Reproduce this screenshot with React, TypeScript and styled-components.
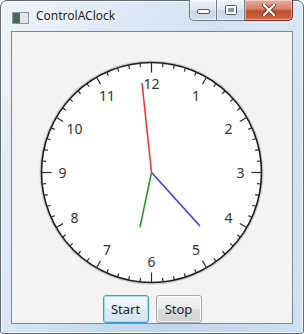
import React from "react";
import styled, { createGlobalStyle } from "styled-components";

const GlobalStyle = createGlobalStyle`
  html, body { margin: 0; padding: 0; background: #ffffff; }
  * { box-sizing: border-box; }
`;

const Window = styled.div`
  width: 304px;
  height: 334px;
  border: 1px solid #5f6b78;
  border-radius: 7px 7px 3px 3px;
  background:
    linear-gradient(100deg, rgba(255,255,255,0.6) 0%, rgba(255,255,255,0.2) 35%, rgba(255,255,255,0) 60%, rgba(255,255,255,0.25) 100%),
    linear-gradient(180deg, #d6e5f4 0%, #c8dcf0 40%, #bfd6ed 100%);
  box-shadow: inset 0 0 0 1px rgba(255,255,255,0.7);
  display: flex;
  flex-direction: column;
  padding: 0 10px 9px 10px;
  font-family: "Noto Sans", "Open Sans", sans-serif;
`;

const TitleBar = styled.div`
  height: 30px;
  display: flex;
  align-items: flex-start;
`;

const TitleIcon = styled.svg`
  margin: 11px 0 0 1px;
  flex: none;
`;

const TitleText = styled.span`
  margin: 7px 0 0 7px;
  font-size: 12px;
  line-height: 16px;
  color: #1b1b1b;
  text-shadow: 0 0 6px rgba(255,255,255,0.95), 0 0 3px #fff;
`;

const Caption = styled.div`
  margin-left: auto;
  margin-top: -1px;
  display: flex;
  height: 21px;
`;

const CapButton = styled.div<{ $w: number; $close?: boolean; $left?: boolean }>`
  width: ${(p) => p.$w}px;
  height: 21px;
  display: flex;
  align-items: center;
  justify-content: center;
  border: 1px solid ${(p) => (p.$close ? "#6e3126" : "#6b7a8d")};
  border-top: none;
  border-left-width: ${(p) => (p.$left ? 1 : 0)}px;
  border-radius: ${(p) => (p.$close ? "0 0 5px 0" : p.$left ? "0 0 0 5px" : "0")};
  background: ${(p) =>
    p.$close
      ? "linear-gradient(180deg, #e8a999 0%, #d8836c 45%, #c2492c 55%, #d4684a 100%)"
      : "linear-gradient(180deg, #eef3f9 0%, #dfe7f1 45%, #c9d5e3 55%, #d5e0ec 100%)"};
  box-shadow: inset 0 0 0 1px rgba(255,255,255,0.45);
`;

const Client = styled.div`
  flex: 1;
  border: 1px solid #7d8792;
  background: #f3f3f3;
  display: flex;
  flex-direction: column;
`;

const Face = styled.svg`
  display: block;
  flex: none;
`;

const ButtonRow = styled.div`
  display: flex;
  justify-content: center;
  gap: 7px;
  padding-top: 5px;
`;

const Button = styled.button<{ $focused?: boolean }>`
  width: 46px;
  height: 28px;
  padding: 0;
  font-family: "Noto Sans", "Open Sans", sans-serif;
  font-size: 13px;
  color: #1e1e1e;
  border-radius: 3px;
  border: 1px solid ${(p) => (p.$focused ? "#3c9fd8" : "#a9a9a9")};
  background: ${(p) =>
    p.$focused
      ? "linear-gradient(180deg, #f4f9fc 0%, #eaf3f9 50%, #dde9f2 51%, #d6e5ef 100%)"
      : "linear-gradient(180deg, #f3f3f3 0%, #ebebeb 50%, #dddddd 51%, #d2d2d2 100%)"};
  box-shadow: inset 0 0 0 1px ${(p) => (p.$focused ? "rgba(160,215,245,0.9)" : "rgba(255,255,255,0.8)")};
`;

const CX = 139.5;
const CY = 140.5;
const R = 110;

function Clock() {
  const ticks = [];
  for (let i = 0; i < 60; i++) {
    const a = (i * 6 * Math.PI) / 180;
    const len = i % 15 === 0 ? 10 : i % 5 === 0 ? 8 : 4;
    const s = Math.sin(a);
    const c = -Math.cos(a);
    ticks.push(
      <line
        key={i}
        x1={CX + s * R}
        y1={CY + c * R}
        x2={CX + s * (R - len)}
        y2={CY + c * (R - len)}
        stroke="#2a2a2a"
        strokeWidth={1.2}
      />
    );
  }
  const nums = [];
  for (let h = 1; h <= 12; h++) {
    const a = (h * 30 * Math.PI) / 180;
    nums.push(
      <text
        key={h}
        x={CX + Math.sin(a) * 89}
        y={CY - Math.cos(a) * 89}
        textAnchor="middle"
        dominantBaseline="central"
        fontFamily='"Noto Sans", "Open Sans", sans-serif'
        fontSize={14}
        fill="#333333"
      >
        {h}
      </text>
    );
  }
  return (
    <Face width={280} height={258} viewBox="0 0 280 258">
      <circle cx={CX} cy={CY} r={R + 1} fill="none" stroke="rgba(0,0,0,0.15)" strokeWidth={2} />
      <circle cx={CX} cy={CY} r={R} fill="#ffffff" stroke="#1c1c1c" strokeWidth={1.6} />
      {ticks}
      {nums}
      <line x1={CX} y1={CY} x2={130} y2={51} stroke="#ff2a2a" strokeWidth={1.5} />
      <line x1={CX} y1={CY} x2={188} y2={194} stroke="#3a3aff" strokeWidth={1.6} />
      <line x1={CX} y1={CY} x2={128} y2={195} stroke="#2e9a2e" strokeWidth={1.6} />
    </Face>
  );
}

export default function App() {
  return (
    <>
      <GlobalStyle />
      <Window>
        <TitleBar>
          <TitleIcon width={17} height={12} viewBox="0 0 17 12">
            <rect x={0.5} y={0.5} width={16} height={11} fill="#e6ecf2" stroke="#8a96a3" />
            <rect x={1} y={1} width={7} height={10} fill="#4c6a5c" />
            <rect x={9} y={1} width={7} height={10} fill="#dfe6ec" />
          </TitleIcon>
          <TitleText>ControlAClock</TitleText>
          <Caption>
            <CapButton $w={28} $left>
              <svg width={13} height={7} viewBox="0 0 13 7">
                <rect x={0.5} y={2.5} width={12} height={4} rx={1.5} fill="#ffffff" stroke="#4a5868" />
              </svg>
            </CapButton>
            <CapButton $w={28}>
              <svg width={12} height={10} viewBox="0 0 12 10">
                <rect x={0.5} y={0.5} width={11} height={9} rx={1} fill="#ffffff" stroke="#4a5868" />
                <rect x={3} y={3} width={6} height={4} fill="#8e9cab" />
              </svg>
            </CapButton>
            <CapButton $w={48} $close>
              <svg width={14} height={12} viewBox="0 0 14 12">
                <path d="M2 1 L12 11 M12 1 L2 11" stroke="#6b2a1d" strokeWidth={4} strokeLinecap="round" />
                <path d="M2 1 L12 11 M12 1 L2 11" stroke="#ffffff" strokeWidth={2.4} strokeLinecap="round" />
              </svg>
            </CapButton>
          </Caption>
        </TitleBar>
        <Client>
          <Clock />
          <ButtonRow>
            <Button $focused>Start</Button>
            <Button>Stop</Button>
          </ButtonRow>
        </Client>
      </Window>
    </>
  );
}
